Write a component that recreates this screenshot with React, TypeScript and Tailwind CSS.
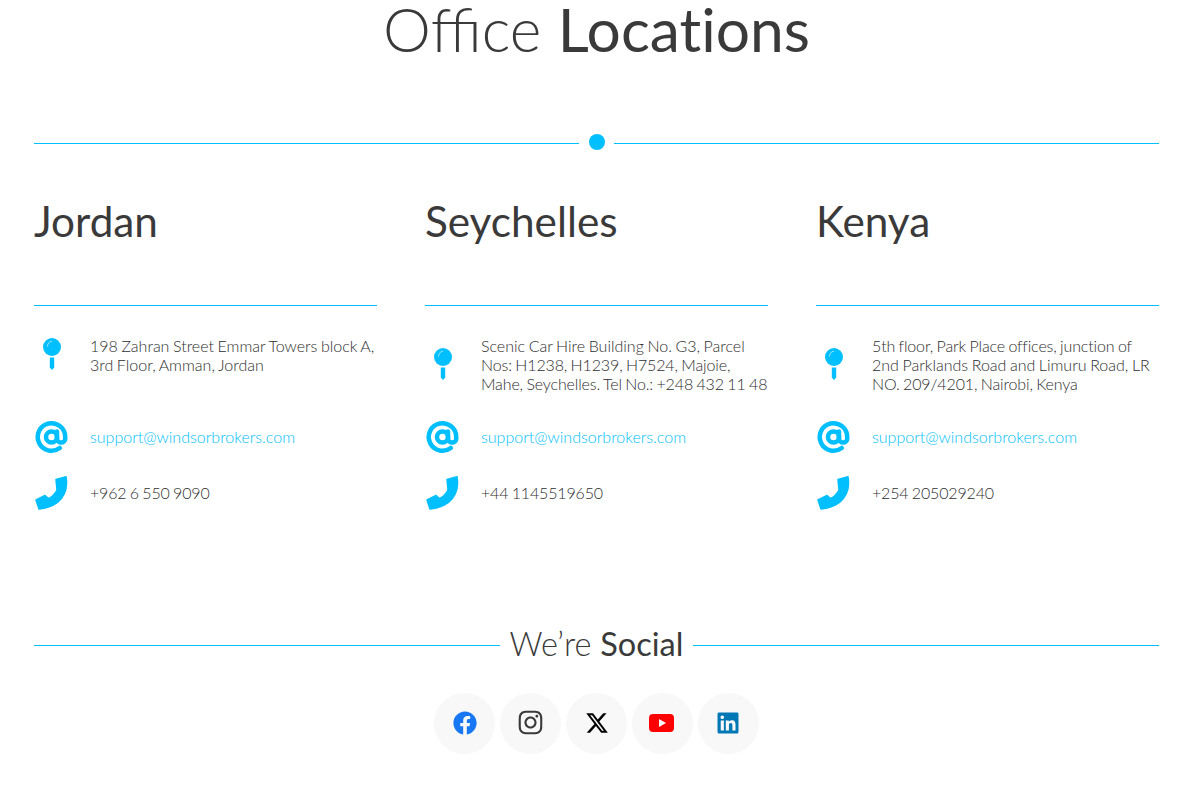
import { AtSign } from "lucide-react";
import { FaFacebook, FaInstagram, FaLinkedin } from "react-icons/fa";
import { FaXTwitter } from "react-icons/fa6";

const offices = [
  {
    name: "Jordan",
    address: [
      { text: "198 Zahran Street Emmar Towers block A,", tight: false },
      { text: "3rd Floor, Amman, Jordan", tight: false },
    ],
    phone: "+962 6 550 9090",
  },
  {
    name: "Seychelles",
    address: [
      { text: "Scenic Car Hire Building No. G3, Parcel", tight: false },
      { text: "Nos: H1238, H1239, H7524, Majoie,", tight: true },
      { text: "Mahe, Seychelles. Tel No.: +248 432 11 48", tight: true },
    ],
    phone: "+44 1145519650",
  },
  {
    name: "Kenya",
    address: [
      { text: "5th floor, Park Place offices, junction of", tight: true },
      { text: "2nd Parklands Road and Limuru Road, LR", tight: false },
      { text: "NO. 209/4201, Nairobi, Kenya", tight: true },
    ],
    phone: "+254 205029240",
  },
];

function PinIcon() {
  return (
    <svg width="18" height="32" viewBox="0 0 18 32" aria-hidden="true">
      <circle cx="9" cy="9" r="9" fill="#00bfff" />
      <path d="M4.5 8.5C4.5 5.5 6.5 3.5 9 3.2" fill="none" stroke="#9fe6ff" strokeWidth="1" />
      <path d="M6.8 19.500h4.400v10l-2.200 2.500-2.200-2.500z" fill="#00bfff" />
    </svg>
  );
}

function PhoneIcon() {
  return (
    <svg width="33" height="34" viewBox="0 0 33 34" aria-hidden="true">
      <path
        d="M21 3.500L31 0.800C33 12 29 21 22.500 26.500C17 30.500 10 32.500 4 33L1 24L10 19.500L13.500 22.500C17.500 20.500 20 18 22 14Z"
        fill="#00bfff"
        stroke="#00bfff"
        strokeWidth="1.500"
        strokeLinejoin="round"
      />
    </svg>
  );
}

function YoutubeIcon() {
  return (
    <svg width="25" height="18" viewBox="0 0 25 18" aria-hidden="true">
      <rect width="25" height="18" rx="4" fill="#ff0000" />
      <path d="M10 5l7 4-7 4z" fill="#fff" />
    </svg>
  );
}

function Office({ name, address, phone }: (typeof offices)[number]) {
  return (
    <section>
      <h2 className="-mt-[5px] mb-[5px] h-[105px] text-[42.300px] leading-[52px] font-normal text-[#3a3a3a]">{name}</h2>
      <div className="h-px bg-[#00bfff]" />

      <div className="mt-[30px] h-[58px]">
        <div className="flex items-center">
          <div className="flex w-[34px] shrink-0 justify-center pb-[2px] pl-[1px]">
            <PinIcon />
          </div>
          <p className="ml-[22px] text-[16px] leading-[19px] font-light whitespace-nowrap [word-spacing:-0.8px]">
            {address.map((line) => (
              <span key={line.text} className={line.tight ? "block tracking-[-0.13px]" : "block"}>
                {line.text}
              </span>
            ))}
          </p>
        </div>
      </div>

      <div className="mt-[26px] flex h-[34px] items-center">
        <AtSign className="size-[34px] shrink-0 pl-[1px] text-[#00bfff]" strokeWidth={3.3} />
        <a href="#" className="ml-[22px] text-[16px] font-light text-[#00bfff]">
          support@windsorbrokers.com
        </a>
      </div>

      <div className="mt-[22px] flex h-[33px] items-center">
        <div className="w-[34px] shrink-0 pl-[1px]">
          <PhoneIcon />
        </div>
        <span className="ml-[22px] text-[16px] font-light tracking-[-0.16px] [word-spacing:-0.8px]">{phone}</span>
      </div>
    </section>
  );
}

export default function App() {
  return (
    <div className="min-h-[806px] bg-white pl-[34px] pr-[33px] text-[#2e2e2e] font-['Lato',sans-serif]">
      <h1 className="h-[62px] text-center text-[60.500px] leading-[58px] font-light text-[#3a3a3a]">
        Office <span className="font-normal [font-variant-ligatures:none]">Locations</span>
      </h1>

      <div className="mt-[72px] flex items-center">
        <div className="mt-[3px] h-px flex-1 bg-[#00bfff]" />
        <div className="ml-[10px] mr-[9px] size-4 rounded-full bg-[#00bfff]" />
        <div className="mt-[3px] h-px flex-1 bg-[#00bfff]" />
      </div>

      <div className="mt-[50px] grid grid-cols-3 gap-x-[48px]">
        {offices.map((office) => (
          <Office key={office.name} {...office} />
        ))}
      </div>

      <div className="mt-[115px] flex items-center">
        <div className="h-px flex-1 bg-[#00bfff]" />
        <h3 className="mx-[10px] mb-[2px] text-[32.500px] leading-[40px] font-light text-[#3a3a3a] [font-variant-ligatures:none]">
          We’re <span className="font-normal">Social</span>
        </h3>
        <div className="h-px flex-1 bg-[#00bfff]" />
      </div>

      <div className="mt-[27px] flex justify-center gap-[5px]">
        <a href="#" className="flex size-[61px] items-center justify-center rounded-full bg-[#f8f8f8] pb-[2px]">
          <FaFacebook className="size-6 text-[#1877f2]" />
        </a>
        <a href="#" className="flex size-[61px] items-center justify-center rounded-full bg-[#f8f8f8] pb-[2px]">
          <FaInstagram className="size-[27px] text-[#3a3a3a]" />
        </a>
        <a href="#" className="flex size-[61px] items-center justify-center rounded-full bg-[#f8f8f8] pb-[2px]">
          <FaXTwitter className="size-6 text-black" />
        </a>
        <a href="#" className="flex size-[61px] items-center justify-center rounded-full bg-[#f8f8f8] pb-[2px] pr-[2px]">
          <YoutubeIcon />
        </a>
        <a href="#" className="flex size-[61px] items-center justify-center rounded-full bg-[#f8f8f8] pb-[2px] pr-[2px]">
          <FaLinkedin className="size-6 text-[#0077b5]" />
        </a>
      </div>
    </div>
  );
}
